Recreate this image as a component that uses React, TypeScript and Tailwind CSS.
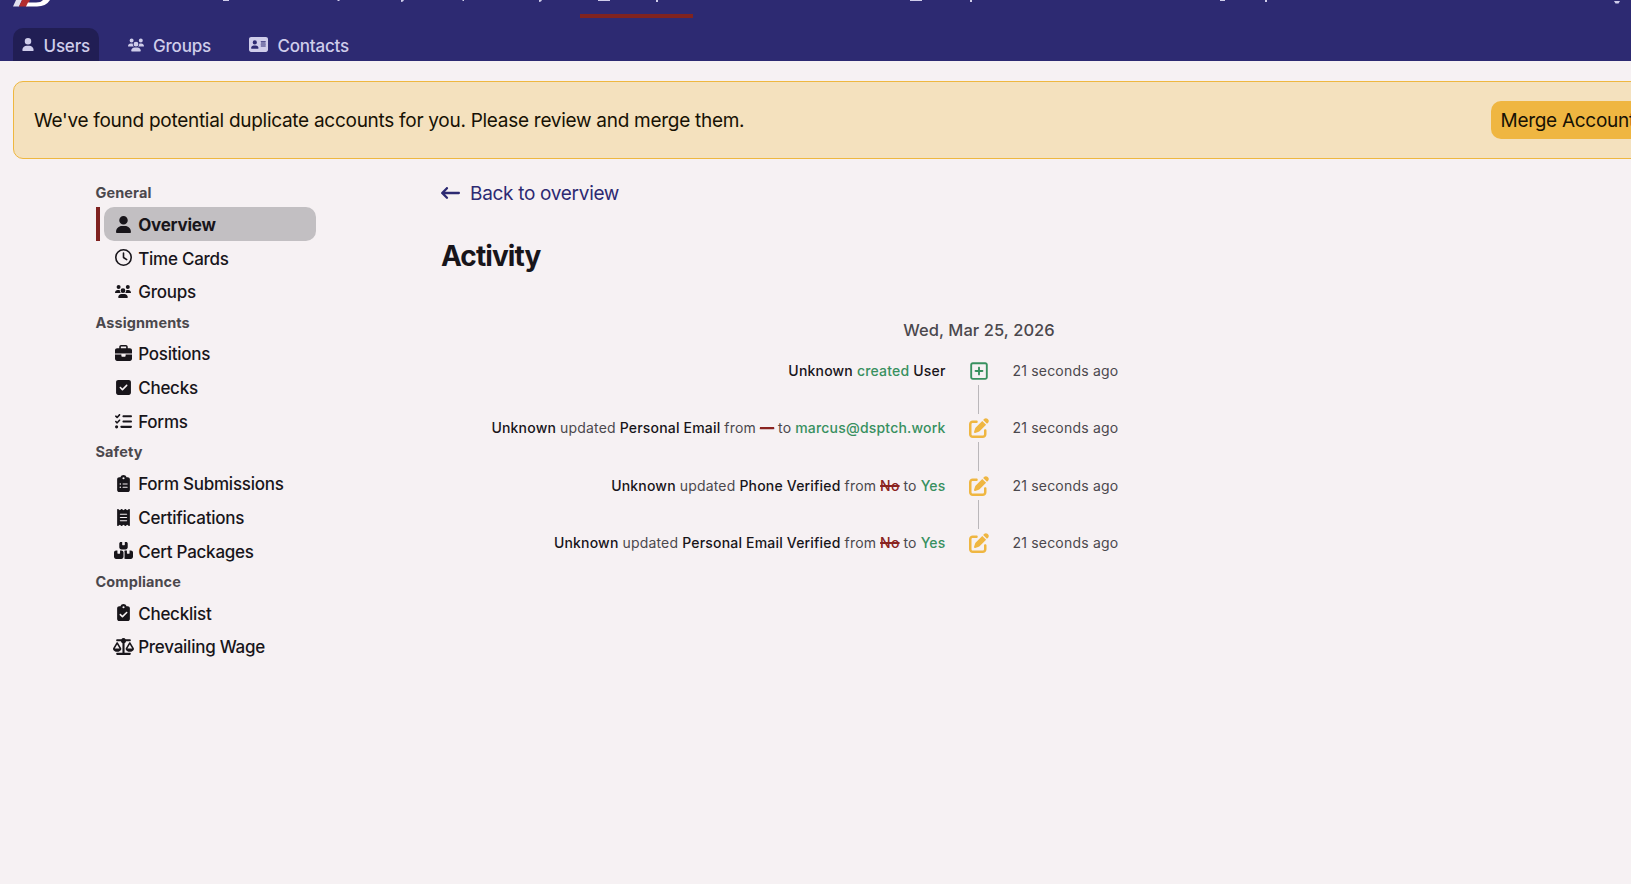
import React from 'react';
import type { IconType } from 'react-icons';
import {
  FaAddressCard,
  FaArrowLeftLong,
  FaBoxesStacked,
  FaBriefcase,
  FaClipboardCheck,
  FaClipboardList,
  FaListCheck,
  FaPenToSquare,
  FaReceipt,
  FaRegClock,
  FaRegSquarePlus,
  FaScaleBalanced,
  FaSquareCheck,
  FaUser,
  FaUsers,
} from 'react-icons/fa6';

interface NavItem {
  label: string;
  icon: IconType;
  iconClass?: string;
  active?: boolean;
}

interface NavSection {
  title: string;
  items: NavItem[];
}

interface ActivityEntry {
  field?: string;
  from?: string;
  to?: string;
}

const sections: NavSection[] = [
  {
    title: 'General',
    items: [
      { label: 'Overview', icon: FaUser, active: true },
      { label: 'Time Cards', icon: FaRegClock },
      { label: 'Groups', icon: FaUsers, iconClass: 'w-[16px] h-[13px]' },
    ],
  },
  {
    title: 'Assignments',
    items: [
      { label: 'Positions', icon: FaBriefcase },
      { label: 'Checks', icon: FaSquareCheck },
      { label: 'Forms', icon: FaListCheck },
    ],
  },
  {
    title: 'Safety',
    items: [
      { label: 'Form Submissions', icon: FaClipboardList },
      { label: 'Certifications', icon: FaReceipt },
      { label: 'Cert Packages', icon: FaBoxesStacked, iconClass: 'w-[19px] h-[17px]' },
    ],
  },
  {
    title: 'Compliance',
    items: [
      { label: 'Checklist', icon: FaClipboardCheck },
      { label: 'Prevailing Wage', icon: FaScaleBalanced, iconClass: 'w-[21px] h-[17px]' },
    ],
  },
];

const activity: ActivityEntry[] = [
  {},
  { field: 'Personal Email', from: '—', to: 'marcus@dsptch.work' },
  { field: 'Phone Verified', from: 'No', to: 'Yes' },
  { field: 'Personal Email Verified', from: 'No', to: 'Yes' },
];

const Header: React.FC = () => (
  <header className="h-[61px] bg-[#2d2a72] text-[#cfcdea] overflow-hidden">
    {/* main bar is scrolled away, only its bottom edge shows */}
    <div className="h-[18px] relative">
      <svg className="block" width="1631" height="7" viewBox="0 0 1631 7">
        <path d="M16 0h6l-3 6.5h-6z" fill="#e0e0ee" />
        <path d="M22 0h8l-3 6.5h-8z" fill="#b32d2e" />
        <path d="M28 2.5h8q5 0 7-2.5h7q-4 6.5-13 6.5H26z" fill="#fff" />
        <path
          d="M223 0h6v1h-6zM337.500 0h2v1h-2zM401 0h3l-1 1.500-2 .5zM462.500 0h1.500v1h-1.500zM539 0h3l-1 1.500-2 .5zM598 0h12v1h-12zM656 0h2v2h-2zM910 0h12v1h-12zM970 0h2v2h-2zM1220 0h5v1h-5zM1265 0h2v2h-2zM1614 1h6l-1.500 2.500h-3z"
          fill="#cfcdea"
        />
      </svg>
      <span className="absolute left-[580px] top-[14px] w-[113px] h-1 bg-[#80231f]" />
    </div>
    <nav className="flex pl-[13px] pt-[10px] text-[17px] tracking-[-0.2px] font-medium leading-[35px]">
      <a className="flex items-center h-[33px] w-[86px] pl-[9px] rounded-t-[10px] bg-[#211e54]">
        <FaUser className="w-[12px] h-[13px] mr-[9.5px]" />
        <span className="pt-[3px]">Users</span>
      </a>
      <a className="flex items-center h-[33px] ml-[28.5px]">
        <FaUsers className="w-[16px] h-[14px] mr-[9.5px]" />
        <span className="pt-[3px]">Groups</span>
      </a>
      <a className="flex items-center h-[33px] ml-[38px]">
        <FaAddressCard className="w-[19px] h-[17px] mr-[9.5px]" />
        <span className="pt-[3px]">Contacts</span>
      </a>
    </nav>
  </header>
);

const DuplicateBanner: React.FC = () => (
  <div className="mt-5 ml-[13px] w-[1660px] h-[78px] flex items-center pl-5 rounded-[10px] border border-[#eeb740] bg-[#f4e1be] text-[19px] tracking-[-0.28px] text-[#171104]">
    <span className="w-[1457px] pt-[2px]">We've found potential duplicate accounts for you. Please review and merge them.</span>
    <button className="h-[38px] px-[9.5px] pt-[2px] rounded-[10px] bg-[#efb641] whitespace-nowrap">Merge Accounts</button>
  </div>
);

const Sidebar: React.FC = () => (
  <aside className="w-[220px]">
    {sections.map((section) => (
      <div key={section.title}>
        <h3 className="h-[28.1px] leading-[28px] text-[14.5px] tracking-[0.1px] font-bold text-[#4b484d]">{section.title}</h3>
        {section.items.map(({ label, icon: Icon, iconClass, active }) => (
          <div key={label} className={`flex h-[33.85px] border-l-4 pl-1 ${active ? 'border-[#7f2220]' : 'border-transparent'}`}>
            <a
              className={`flex items-center w-full pl-[9px] rounded-[10px] text-[17px] tracking-[-0.25px] ${
                active ? 'bg-[#c2bfc2] font-bold' : 'font-medium'
              }`}
            >
              <span className="flex justify-center w-[21px] mr-[4.7px]">
                <Icon className={`shrink-0 ${iconClass ?? 'w-[17px] h-[17px]'}`} />
              </span>
              <span className="pt-[3px]">{label}</span>
            </a>
          </div>
        ))}
      </div>
    ))}
  </aside>
);

const ActivityText: React.FC<{ entry: ActivityEntry }> = ({ entry }) => {
  if (!entry.field) {
    return (
      <>
        Unknown <span className="text-[#38905f]">created</span> User
      </>
    );
  }
  return (
    <>
      Unknown <span className="font-normal text-[#4b484d]">updated</span> {entry.field}{' '}
      <span className="font-normal text-[#4b484d]">from</span>{' '}
      <span className="text-[#8a2320] line-through decoration-[1.5px]">{entry.from}</span>{' '}
      <span className="font-normal text-[#4b484d]">to</span> <span className="text-[#38905f]">{entry.to}</span>
    </>
  );
};

const App: React.FC = () => (
  <div className="h-[884px] w-full overflow-hidden bg-[#f6f1f3] text-[#18151a] font-['Inter','Liberation_Sans',sans-serif]">
    <Header />
    <DuplicateBanner />
    <div className="flex pl-[95.5px] pt-5">
      <Sidebar />
      <main className="ml-[125.5px] w-[700px]">
        <a className="flex items-center h-[28px] text-[19px] tracking-[-0.3px] text-[#2d2a72]">
          <FaArrowLeftLong className="w-[19px] h-[20px] mr-[10px]" />
          <span className="pt-[2px]">Back to overview</span>
        </a>
        <h1 className="mt-[29px] h-[40px] leading-[40px] text-[28px] tracking-[-0.9px] font-bold">Activity</h1>
        <div className="ml-[437px] mt-[42px] w-[202px] h-[24px] flex items-center justify-center text-[16.5px] tracking-[0.06px] font-medium text-[#4b484d]">
          Wed, Mar 25, 2026
        </div>
        <div className="mt-[8px]">
          {activity.map((entry, i) => (
            <div key={i} className="flex h-[57.4px] text-[14px] tracking-[0.19px]">
              <div className="w-[504.5px] h-[42px] leading-[42px] text-right font-medium whitespace-nowrap">
                <ActivityText entry={entry} />
              </div>
              <div className="w-[66.5px] flex flex-col items-center">
                <span className="flex h-[42px] shrink-0 items-center">
                  {entry.field ? (
                    <FaPenToSquare className="w-[20px] h-[20px] text-[#efb641]" />
                  ) : (
                    <FaRegSquarePlus className="w-[20px] h-[20px] text-[#38905f]" />
                  )}
                </span>
                {i < activity.length - 1 && <span className="-mt-[7px] w-px h-[29px] shrink-0 bg-[#bab7ba]" />}
              </div>
              <div className="h-[42px] leading-[42px] pl-[0.5px] text-[#4b484d]">21 seconds ago</div>
            </div>
          ))}
        </div>
      </main>
    </div>
  </div>
);

export default App;
